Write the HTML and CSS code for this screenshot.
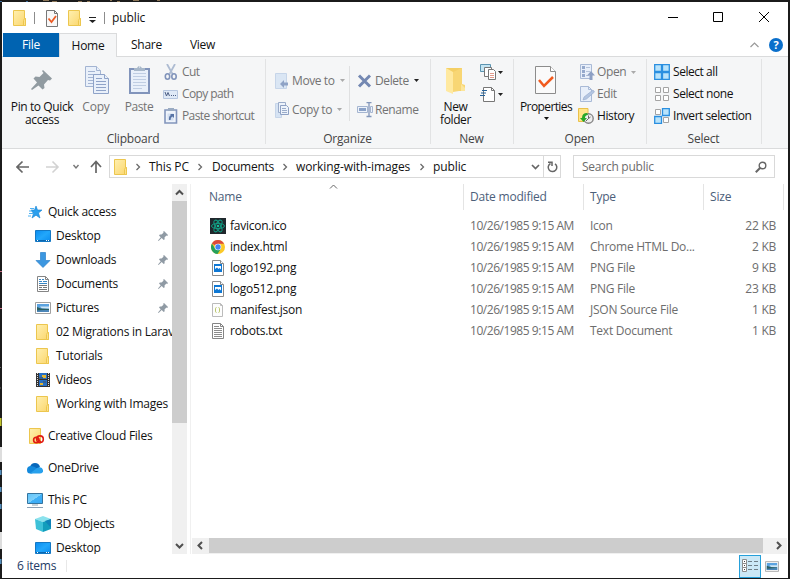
FILE: index.html
```html
<!DOCTYPE html>
<html lang="en">
<head>
<meta charset="utf-8">
<title>public</title>
<link rel="stylesheet" href="styles.css">
</head>
<body>
<svg class="defs" width="0" height="0" aria-hidden="true">
  <defs>
    <linearGradient id="gold" x1="0" y1="0" x2="1" y2="1"><stop offset="0" stop-color="#fff0b0"/><stop offset="1" stop-color="#fbd66d"/></linearGradient>
    <linearGradient id="sky" x1="0" y1="0" x2="1" y2="1"><stop offset="0" stop-color="#0a8cf0"/><stop offset=".5" stop-color="#22a7fb"/><stop offset="1" stop-color="#0a8cf0"/></linearGradient>
    <linearGradient id="screen" x1="0" y1="0" x2="1" y2="1"><stop offset="0" stop-color="#5fc3fa"/><stop offset=".5" stop-color="#7dd0fb"/><stop offset=".52" stop-color="#3fb0f7"/><stop offset="1" stop-color="#3aa9f5"/></linearGradient>
    <symbol id="folder" viewBox="0 0 16 16"><path d="M1.5.5h11v8h1v7h-12z" fill="url(#gold)" stroke="#ecc64e"/><path d="M11.5 15.5v-5l1-2h1v7z" fill="#fde28c" stroke="#ecc64e"/></symbol>
    <symbol id="pin" viewBox="0 0 10 10"><path d="M6 0l4 4-.8.9-.8-.3-1.9 1.9.2 1.7-1 .8-2-2L.6 10 0 9.500 2.700 6.200 1 4.400l.8-1 1.700.2L5.500 1.700 5.200.8z" fill="#8f9aa4"/></symbol>
    <symbol id="chev" viewBox="0 0 6 8"><path d="M1.500 1l3 3-3 3" fill="none" stroke="#6a6a6a" stroke-width="1.300"/></symbol>
    <symbol id="tri" viewBox="0 0 5 3"><path d="M0 0h5L2.500 3z" fill="currentColor"/></symbol>
    <symbol id="desktop" viewBox="0 0 16 16"><path d="M.5 2.500h15v11H.5z" fill="url(#sky)" stroke="#1478c4"/><path d="M1 12.500h14" stroke="#0b67b0"/><path d="M2 12.500h1m8 0h1m1 0h1" stroke="#fff"/></symbol>
    <symbol id="picture" viewBox="0 0 16 12"><path d="M.5.5h15v11H.5z" fill="#fff" stroke="#a0a0a0"/><path d="M2 2h12v8H2z" fill="#5ba3e0"/><path d="M5 4.500h9v2H7z" fill="#cfe6f5"/><path d="M2 5l4 1.500L14 7v1L2 9z" fill="#2b5f62"/><path d="M2 8.500L14 8v2H2z" fill="#4c86b8"/></symbol>
    <symbol id="png" viewBox="0 0 16 16"><path d="M2.500.5h8l3 3v12h-11z" fill="#fff" stroke="#8a8a8a"/><path d="M10.500.5v3h3" fill="#fff" stroke="#8a8a8a"/><path d="M4 4h8v8H4z" fill="#0f78d4"/><path d="M5 6h6v3.500L9.500 8 8.500 9 7 7.500 5 9z" fill="#fff"/></symbol>
  </defs>
</svg>
<svg class="backdrop" width="790" height="579" aria-hidden="true">
  <path d="M0 1.500h2m24 0h2" stroke="#3d6c9c"/><path d="M43 .5h6m3 1h5m21 0h4m5 0h3m20-1h2m5 1h3m13-1h6m18 0h3" stroke="#8b7557"/>
  <path d="M0 271.500h2M0 308.500h2" stroke="#c66b83"/><path d="M0 367.500h1M0 388h1" stroke="#666"/><path d="M0 418v8" stroke="#c3c52e" stroke-width="3"/>
  <path d="M0 447v15m0 70v17" stroke="#ddd" stroke-width="4"/><path d="M0 470v5m0 12v5m0 12v5m0 50v5" stroke="#548ebc" stroke-width="3"/>
</svg>
<div class="window">
  <header class="titlebar">
    <svg class="t-folder" width="16" height="16"><use href="#folder"/></svg>
    <i class="t-sep"></i>
    <svg class="t-doc" width="14" height="17" viewBox="0 0 14 17"><path d="M1.500.5h8l3 3v13h-11z" fill="#f8f8f8" stroke="#777"/><path d="M9.500.5v3h3" fill="none" stroke="#777"/><path d="M3.500 8.500l3 3.500 4.500-6" fill="none" stroke="#ec5b24" stroke-width="1.800"/></svg>
    <svg class="t-folder2" width="16" height="16"><use href="#folder"/></svg>
    <svg class="t-menu" width="7" height="6" viewBox="0 0 7 6"><path d="M0 .5h7" stroke="#222"/><path d="M0 3h7L3.500 6z" fill="#222"/></svg>
    <i class="t-sep"></i>
    <span class="t-title">public</span>
    <svg class="t-controls" width="104" height="12" viewBox="0 0 104 12" fill="none" stroke="#000"><path d="M0 6.500h10M45.500 1.500h9v9h-9zM91 1l10 10M101 1L91 11"/></svg>
  </header>
  <nav class="tabs">
    <span class="tab file">File</span><span class="tab home">Home</span><span class="tab share">Share</span><span class="tab view">View</span>
    <svg class="collapse" width="9" height="6" viewBox="0 0 9 6"><path d="M.5 5l4-4 4 4" fill="none" stroke="#999" stroke-width="1.200"/></svg>
    <span class="help">?</span>
  </nav>
  <section class="ribbon">
    <div class="group clipboard">
      <div class="content">
        <div class="big pinbtn"><svg width="32" height="32" viewBox="0 0 32 32"><path d="M17 5l9 8.500-2 2-2-.5-4 4.500.5 3.500-2 1.500-4-4L6 25l-1-1 6-6.500-3.500-4 2-2 4 .5 4-4L16 6z" fill="#919ba1"/></svg><span>Pin to Quick<br>access</span></div>
        <div class="big copy off"><svg width="32" height="32" viewBox="0 0 32 32"><g fill="#e9f0fa" stroke="#a3b4d2"><path d="M5.500 1.500h11l4 4v16h-15z"/><path d="M16.500 1.500v4h4M8 6.500h7M8 9.500h10M8 12.500h5M8 15.500h5M8 18.500h5"/><path d="M13.500 9.500h11l4 4v15h-15z" stroke="#8fa3c8"/><path d="M24.500 9.500v4h4M16 13.500h6M16 16.500h10M16 19.500h10M16 22.500h10M16 25.500h10" stroke="#8fa3c8"/></g></svg><span>Copy</span></div>
        <div class="big paste off"><svg width="32" height="32" viewBox="0 0 32 32"><path d="M7 4h19v24H7z" fill="#e9f0fa" stroke="#8194bb" stroke-width="2"/><path d="M10 8.500h13M10 11.500h13M10 14.500h13M10 17.500h13M10 20.500h13M10 23.500h9" stroke="#c0cee3"/><path d="M11 3h3q2-4 5 0h3v3H11z" fill="#a8b8ca"/><path d="M16 2h1" stroke="#fff"/></svg><span>Paste</span></div>
        <div class="list">
          <div class="item off"><svg width="16" height="16" viewBox="0 0 16 16"><path d="M4 0l5.500 10M12 0L6.500 10" stroke="#aebcd2" stroke-width="1.800" fill="none"/><ellipse cx="4.500" cy="12.500" rx="2.200" ry="2.700" fill="none" stroke="#8093ba" stroke-width="1.600"/><ellipse cx="11" cy="12.500" rx="2.200" ry="2.700" fill="none" stroke="#8093ba" stroke-width="1.600"/></svg><span>Cut</span></div>
          <div class="item off"><svg width="16" height="16" viewBox="0 0 16 16"><path d="M.5 4.500h14v8H.5z" fill="#dfe9f6" stroke="#b6c6df"/><path d="M2 6l1.500 4L5 6.500 6.500 10M8 9.500h1m1 0h1m1 0h1" stroke="#4c5e85" fill="none"/></svg><span>Copy path</span></div>
          <div class="item off"><svg width="16" height="16" viewBox="0 0 16 16"><path d="M2 2h11.500v13H2z" fill="#eff4fb" stroke="#8295bc" stroke-width="1.600"/><path d="M5 0h6v3H5z" fill="#9aabc2"/><path d="M4.500 5.500h6v7h-6z" fill="#d2def0"/><path d="M6 12q-.5-4 2-5L7 6h4v4L9.500 8.500Q7.500 9 7.500 12z" fill="#5874a6"/></svg><span>Paste shortcut</span></div>
        </div>
      </div><div class="caption">Clipboard</div>
    </div>
    <div class="group organize">
      <div class="content">
        <div class="list wide">
          <div class="item off"><svg width="16" height="16" viewBox="0 0 16 16"><path d="M.5.5h11v15H.5z" fill="#dae6f4" stroke="#c6d5e9"/><path d="M5 11l4-4v2.500h4v3H9V15z" fill="#8fa3c6"/></svg><span>Move to</span><svg class="tri" width="5" height="3"><use href="#tri"/></svg></div>
          <div class="item off"><svg width="16" height="16" viewBox="0 0 16 16"><path d="M.5 1.500h6v14h-6z" fill="#d6e3f3" stroke="#c6d5e9"/><path d="M3.500.5h7v10h-7z" fill="#edf3fb" stroke="#9bacca"/><path d="M5.500 3.500h6l2 2v7h-8z" fill="#edf3fb" stroke="#8ea1c4"/><path d="M7 6.500h4m-4 2h5m-5 2h5" stroke="#9bacca"/></svg><span>Copy to</span><svg class="tri" width="5" height="3"><use href="#tri"/></svg></div>
        </div>
        <i class="rule"></i>
        <div class="list wide right">
          <div class="item off"><svg width="16" height="16" viewBox="0 0 16 16"><path d="M2 2.500l11 11M13 2.500l-11 11" stroke="#7488b2" stroke-width="3"/></svg><span>Delete</span><svg class="tri dark" width="5" height="3"><use href="#tri"/></svg></div>
          <div class="item off"><svg width="16" height="16" viewBox="0 0 16 16"><path d="M.5 4.500h10v6H.5zM13.500 4.500h2v6h-2z" fill="#edf3fb" stroke="#a5b5d0"/><path d="M2 6h7v3H2z" fill="#8ba2c8"/><path d="M9.500.5h2.500m0 0h2.500M12 .5v14M9.500 14.500h5" stroke="#8296ba" stroke-width="1.300"/></svg><span>Rename</span></div>
        </div>
      </div><div class="caption">Organize</div>
    </div>
    <div class="group new">
      <div class="content">
        <div class="big"><svg width="32" height="32" viewBox="0 0 32 32"><path d="M6 3h16v20h3v3H6z" fill="#f4cf65"/><path d="M6 3l7 4v22l-7-3z" fill="#ffe9a0"/><path d="M13 7l9-4v16l3 1v5l-12 2z" fill="#f8d674"/><path d="M21 19l4 4v3h-4z" fill="#fce69b"/></svg><span>New<br>folder</span></div>
        <div class="list">
          <div class="item"><svg width="17" height="17" viewBox="0 0 17 17"><path d="M.5.5h10v7H.5z" fill="#c5e5f3" stroke="#5b94b1"/><path d="M4.500 3.500h7v9h-7z" fill="#fff" stroke="#777"/><path d="M8.500 5.500h5l2 2v8h-7z" fill="#fff" stroke="#777"/><path d="M10 9.500h4m-4 2h4m-4 2h4" stroke="#e29b8c"/></svg><svg class="tri dark" width="5" height="3"><use href="#tri"/></svg></div>
          <div class="item"><svg width="17" height="17" viewBox="0 0 17 17"><path d="M3.500 1.500h8l3 3v11h-11z" fill="#fff" stroke="#777"/><path d="M11.500 1.500v3h3" fill="none" stroke="#777"/><path d="M2 4.500h5M1 7h5M0 9.500h5" stroke="#27649b" stroke-width="1.200"/></svg><svg class="tri dark" width="5" height="3"><use href="#tri"/></svg></div>
        </div>
      </div><div class="caption">New</div>
    </div>
    <div class="group open">
      <div class="content">
        <div class="big"><svg width="32" height="32" viewBox="0 0 32 32"><path d="M5.500 1.500h15l5 5v22h-20z" fill="#fafafa" stroke="#8c8c8c"/><path d="M20.500 1.500v5h5" fill="#fff" stroke="#8c8c8c"/><path d="M9 15l5 6 9-9" fill="none" stroke="#f15a1d" stroke-width="2.500"/></svg><span>Properties</span><svg class="down" width="5" height="3"><use href="#tri"/></svg></div>
        <div class="list">
          <div class="item off"><svg width="16" height="16" viewBox="0 0 16 16"><path d="M.5.5h11v14H.5z" fill="#e8effa" stroke="#a9bad6"/><path d="M2 2h3v3H2zm0 4h3v3H2zm0 4h3v3H2z" fill="#95a9cc"/><path d="M6 3.500h4m-4 4h4m-4 4h3" stroke="#b5c3da"/><path d="M11 7l4 4.500h-2.500V16h-3v-4.500H7z" fill="#8da0c4"/></svg><span>Open</span><svg class="tri" width="5" height="3"><use href="#tri"/></svg></div>
          <div class="item off"><svg width="16" height="16" viewBox="0 0 16 16"><path d="M.5.5h8l3 3v12H.5z" fill="#e8effa" stroke="#a9bad6"/><path d="M8.500.5v3h3" fill="none" stroke="#a9bad6"/><path d="M3 14l1-3 9-7 1.500 2-8 7z" fill="#b4c6e2" stroke="#93a8cb" stroke-width=".6"/></svg><span>Edit</span></div>
          <div class="item history"><svg width="16" height="16" viewBox="0 0 16 16"><path d="M.5.5h9.500v13H.5z" fill="#ffe588" stroke="#eac04a"/><circle cx="10.500" cy="10.500" r="4.700" fill="#eee" stroke="#858585" stroke-width="1.400"/><path d="M10.500 7.500v3l2-1.500M8 13l2.500-2.500" stroke="#666" fill="none"/><path d="M2 10h2q0-5 5-5l1 2Q7 7 7 10h2l-3.500 4z" fill="#28a828"/></svg><span>History</span></div>
        </div>
      </div><div class="caption">Open</div>
    </div>
    <div class="group select">
      <div class="content"><div class="list">
        <div class="item"><svg width="16" height="16" viewBox="0 0 16 16"><path d="M.7.7h6.800v6.800H.7zm7.800 0h6.800v6.800H8.500zM.7 8.500h6.800v6.800H.7zm7.800 0h6.800v6.800H8.500z" fill="#b9e3fb" stroke="#2a8fe0" stroke-width="1.300"/></svg><span>Select all</span></div>
        <div class="item"><svg width="16" height="16" viewBox="0 0 16 16"><path d="M1.500 1.500h5v5h-5zm8 0h5v5h-5zm-8 8h5v5h-5zm8 0h5v5h-5z" fill="#fff" stroke="#a4a4a4"/></svg><span>Select none</span></div>
        <div class="item"><svg width="16" height="16" viewBox="0 0 16 16"><path d="M1.500 1.500h5v5h-5zm8 8h5v5h-5z" fill="#fff" stroke="#a4a4a4"/><path d="M8.500.7h6.800v6.800H8.500zM.7 8.500h6.800v6.800H.7z" fill="#b9e3fb" stroke="#2a8fe0" stroke-width="1.300"/></svg><span>Invert selection</span></div>
      </div></div><div class="caption">Select</div>
    </div>
  </section>
  <div class="address">
    <svg class="arrows" width="89" height="14" viewBox="0 0 89 14" fill="none"><path d="M1 7h12M6.500 1.500L1 7l5.500 5.500" stroke="#666" stroke-width="1.700"/><path d="M30 7h12M36.500 1.500L42 7l-5.500 5.500" stroke="#d2d2d2" stroke-width="1.600"/><path d="M57.500 5l2.500 3 2.500-3" stroke="#777" stroke-width="1.400"/><path d="M80 13V2M75 7l5-5.500L85 7" stroke="#666" stroke-width="1.700"/></svg>
    <div class="path">
      <svg class="pf" width="16" height="16"><use href="#folder"/></svg>
      <svg class="c1" width="6" height="8"><use href="#chev"/></svg><span class="p1">This PC</span>
      <svg class="c" width="6" height="8"><use href="#chev"/></svg><span class="p2">Documents</span>
      <svg class="c" width="6" height="8"><use href="#chev"/></svg><span class="p3">working-with-images</span>
      <svg class="c" width="6" height="8"><use href="#chev"/></svg><span class="p4">public</span>
      <svg class="drop" width="9" height="6" viewBox="0 0 9 6"><path d="M1 1l3.500 3.500L8 1" fill="none" stroke="#666" stroke-width="1.700"/></svg>
      <span class="refresh"><svg width="11" height="12" viewBox="0 0 11 12"><path d="M3.500 2.500A4.300 4.300 0 1 0 8 2.800" fill="none" stroke="#666" stroke-width="1.500"/><path d="M1 1.300h4V5" fill="none" stroke="#666" stroke-width="1.500"/></svg></span>
    </div>
    <div class="search"><span>Search public</span><svg width="12" height="12" viewBox="0 0 12 12" fill="none" stroke="#666"><circle cx="7.500" cy="4.500" r="3.300" stroke-width="1.400"/><path d="M5 7L.8 11.200" stroke-width="2"/></svg></div>
  </div>
  <main class="body">
    <aside class="tree">
      <div class="node root"><svg width="16" height="16" viewBox="0 0 16 16"><path d="M9 2l1.500 4h4.500l-3.500 3 1.500 5-4-2.800L5 14l1.500-4.500L4 6h3.500z" fill="#2a9fed" stroke="#1583d4" stroke-width=".6"/><path d="M3 4.500h4M2 7h3M2 9.500h4M1 12h3" stroke="#4eb2f2"/></svg><span>Quick access</span></div>
      <div class="node"><svg width="16" height="16"><use href="#desktop"/></svg><span>Desktop</span><svg class="pn" width="10" height="10"><use href="#pin"/></svg></div>
      <div class="node"><svg width="16" height="16" viewBox="0 0 16 16"><path d="M5.500.5h5v8h4.500L8 15.500 1 8.500h4.500z" fill="#3c97e0" stroke="#2c82cc" stroke-width=".7"/></svg><span>Downloads</span><svg class="pn" width="10" height="10"><use href="#pin"/></svg></div>
      <div class="node"><svg width="16" height="16" viewBox="0 0 16 16"><path d="M2.500.5h8l3 3v12h-11z" fill="#fff" stroke="#858585"/><path d="M10.500.5v3h3" fill="none" stroke="#858585"/><path d="M4 3.500h2m1 0h2M4 5.500h3m1 0h4M4 7.500h8" stroke="#3a88c6"/><path d="M4 9.500h8M4 11.500h3m1 0h4M4 13.500h8" stroke="#777"/></svg><span>Documents</span><svg class="pn" width="10" height="10"><use href="#pin"/></svg></div>
      <div class="node"><svg width="16" height="12"><use href="#picture"/></svg><span>Pictures</span><svg class="pn" width="10" height="10"><use href="#pin"/></svg></div>
      <div class="node"><svg width="16" height="16"><use href="#folder"/></svg><span>02 Migrations in Laravel</span></div>
      <div class="node"><svg width="16" height="16"><use href="#folder"/></svg><span>Tutorials</span></div>
      <div class="node"><svg width="16" height="16" viewBox="0 0 16 16"><path d="M1 1h14v14H1z" fill="#333"/><path d="M2.500 1v14M13.500 1v14" stroke="#ddd" stroke-dasharray="1 1"/><path d="M4 1h8v6H4zM4 8h8v6H4z" fill="#286fc3"/><path d="M7 3h4v3H7zM5 11h3v2H5z" fill="#e3b532"/><path d="M4 5h4v2H4zM8 9h3v2H8z" fill="#37608a"/></svg><span>Videos</span></div>
      <div class="node"><svg width="16" height="16"><use href="#folder"/></svg><span>Working with Images</span></div>
      <div class="node root spaced"><svg width="18" height="16" viewBox="0 0 18 16"><path d="M2.500.5h11v15h-11z" fill="url(#gold)" stroke="#ecc64e"/><g fill="none" stroke="#e11b12" stroke-width="1.600"><circle cx="9.300" cy="12" r="2.700"/><circle cx="13" cy="11.200" r="3.300"/><path d="M9 10l5 4"/></g></svg><span>Creative Cloud Files</span></div>
      <div class="node root spaced"><svg width="16" height="16" viewBox="0 0 16 16"><path d="M3 7q1-4 5-4t5 4l-4 3z" fill="#0868bb"/><path d="M0 10q0-4 4-4 3 0 7 3l-6 4.500H3Q0 13.500 0 10z" fill="#1389dc"/><path d="M3 13.500L10 8q5-2 6 2 .5 3.500-3 3.500z" fill="#28a1ed"/></svg><span>OneDrive</span></div>
      <div class="node root spaced"><svg width="16" height="16" viewBox="0 0 16 16"><path d="M.5 1.500h15v10H.5z" fill="url(#screen)" stroke="#35749f"/><path d="M5 13h6" stroke="#8fa4b2"/><path d="M0 15.500h16" stroke="#8ca1b5"/></svg><span>This PC</span></div>
      <div class="node"><svg width="16" height="16" viewBox="0 0 16 16"><path d="M0 3l8-3 8 3-8 3z" fill="#8be2ed"/><path d="M0 3l8 3v10l-7-3z" fill="#3dc1d8"/><path d="M8 6l8-3v10l-8 3z" fill="#129dbc"/><path d="M10 5l6-2v9z" fill="#0f83b9"/></svg><span>3D Objects</span></div>
      <div class="node last"><svg width="16" height="16"><use href="#desktop"/></svg><span>Desktop</span></div>
    </aside>
    <div class="vscroll"><svg width="15" height="17" viewBox="0 0 15 17"><path d="M4 10.500L7.500 7l3.500 3.500" fill="none" stroke="#505050" stroke-width="2"/></svg><i class="vthumb"></i><svg class="end" width="15" height="17" viewBox="0 0 15 17"><path d="M4 7l3.500 3.500L11 7" fill="none" stroke="#505050" stroke-width="2"/></svg></div>
    <section class="files">
      <svg class="sort" width="9" height="5" viewBox="0 0 9 5"><path d="M1 4.500l3.500-3.500L8 4.500" fill="none" stroke="#666"/></svg>
      <div class="row head"><span>Name</span><span>Date modified</span><span>Type</span><span>Size</span></div>
      <div class="row"><span class="nm"><svg width="16" height="16" viewBox="0 0 16 16"><path d="M0 0h16v16H0z" fill="#20282d"/><g fill="none" stroke="#119c82"><ellipse cx="8" cy="8" rx="6.500" ry="2.600"/><ellipse cx="8" cy="8" rx="6.500" ry="2.600" transform="rotate(60 8 8)"/><ellipse cx="8" cy="8" rx="6.500" ry="2.600" transform="rotate(120 8 8)"/></g><circle cx="8" cy="8" r="1.300" fill="#16c09c"/></svg>favicon.ico</span><span class="date">10/26/1985 9:15 AM</span><span>Icon</span><span>22 KB</span></div>
      <div class="row"><span class="nm"><svg width="16" height="16" viewBox="0 0 16 16"><circle cx="8" cy="8" r="7" fill="#fbc928"/><path d="M8 8L1.900 4.500A7 7 0 0 1 14.100 4.800H8z" fill="#dc4a3d"/><path d="M1.900 4.500A7 7 0 0 0 7.500 15L11 9.500 8 8 5 9.600z" fill="#26a05b"/><circle cx="8" cy="8" r="3.300" fill="#fff"/><circle cx="8" cy="8" r="2.700" fill="#4385f4"/></svg>index.html</span><span class="date">10/26/1985 9:15 AM</span><span>Chrome HTML Do...</span><span>2 KB</span></div>
      <div class="row"><span class="nm"><svg width="16" height="16"><use href="#png"/></svg>logo192.png</span><span class="date">10/26/1985 9:15 AM</span><span>PNG File</span><span>9 KB</span></div>
      <div class="row"><span class="nm"><svg width="16" height="16"><use href="#png"/></svg>logo512.png</span><span class="date">10/26/1985 9:15 AM</span><span>PNG File</span><span>23 KB</span></div>
      <div class="row"><span class="nm"><svg width="16" height="16" viewBox="0 0 16 16"><path d="M2.500 1.500h8l2 2v11h-10z" fill="#fdfdfd" stroke="#bbb"/><path d="M10.500 1.500v2h2" fill="none" stroke="#bbb"/><path d="M6.500 5.500q-1 0-1 1.300v2.400q0 1.300 1 1.300M8.500 5.500q1 0 1 1.300v2.400q0 1.300-1 1.300" fill="none" stroke="#b9c66a"/></svg>manifest.json</span><span class="date">10/26/1985 9:15 AM</span><span>JSON Source File</span><span>1 KB</span></div>
      <div class="row"><span class="nm"><svg width="16" height="16" viewBox="0 0 16 16"><path d="M2.500.5h8l3 3v12h-11z" fill="#fff" stroke="#858585"/><path d="M10.500.5v3h3" fill="none" stroke="#858585"/><path d="M4 3.500h5M4 5.500h8M4 7.500h8M4 9.500h8M4 11.500h8M4 13.500h8" stroke="#8c8c8c"/></svg>robots.txt</span><span class="date">10/26/1985 9:15 AM</span><span>Text Document</span><span>1 KB</span></div>
      <div class="hscroll"><svg width="17" height="15" viewBox="0 0 17 15"><path d="M10 4L6.500 7.500 10 11" fill="none" stroke="#505050" stroke-width="2"/></svg><i class="hthumb"></i><svg class="hend" width="17" height="15" viewBox="0 0 17 15"><path d="M7 4l3.500 3.500L7 11" fill="none" stroke="#505050" stroke-width="2"/></svg></div>
    </section>
  </main>
  <footer class="status"><span class="count">6 items</span><i></i>
    <div class="details"><svg width="16" height="14" viewBox="0 0 16 14"><path d="M.5.500h4v4h-4zm0 4h4v4h-4zm0 4h4v4h-4z" fill="#fff" stroke="#8c8c8c"/><path d="M2 2.500h1m-1 4h1m-1 4h1" stroke="#444"/><path d="M6 2.500h4m2 0h4m-10 4h4m2 0h4m-10 4h4m2 0h4" stroke="#6f7f88"/></svg></div>
    <svg class="thumbs" width="14" height="11"><use href="#picture"/></svg>
  </footer>
</div>
</body>
</html>
```
FILE: styles.css
```css
* { box-sizing: border-box; }
body { margin: 0; padding: 2px 2px 1px; width: 790px; height: 579px; overflow: hidden; background: #1b1b1b; font: 12px/16px "Open Sans", "Noto Sans", sans-serif; letter-spacing: -.25px; color: #111; }
svg { display: block; flex: none; }
.defs, .backdrop { position: absolute; left: 0; top: 0; }
.window { position: relative; width: 786px; height: 576px; background: #fff; display: flex; flex-direction: column; overflow: hidden; white-space: nowrap; }

.titlebar { height: 31px; flex: none; display: flex; align-items: center; padding-left: 10px; }
.t-sep { width: 1px; height: 12px; background: #8c8c8c; }
.t-folder { margin-right: 6px; }
.t-doc { margin-left: 10px; margin-top: 1px; }
.t-folder2 { margin-left: 8px; margin-top: 1px; }
.t-menu { margin: 5px 8px 0 6px; }
.t-title { margin-left: 7px; letter-spacing: -.1px; }
.t-controls { margin-left: auto; margin-right: 16px; margin-top: -1px; }

.tabs { height: 24px; flex: none; display: flex; align-items: center; border-bottom: 1px solid #dadbdc; padding-left: 1px; }
.tab { height: 24px; line-height: 24px; text-align: center; }
.file { width: 56px; background: #0063b1; color: #fff; }
.home { width: 58px; background: #f5f6f7; border: 1px solid #dadbdc; border-bottom: 0; line-height: 23px; }
.share { width: 59px; }
.view { width: 53px; }
.collapse { margin-left: auto; }
.help { width: 14px; height: 14px; margin: 0 5px 0 10px; border-radius: 50%; background: #0a6fcb; color: #fff; font-weight: 700; font-size: 11px; line-height: 14px; text-align: center; }

.ribbon { height: 92px; flex: none; display: flex; background: #f5f6f7; border-bottom: 1px solid #dadbdc; letter-spacing: -.4px; }
.group { position: relative; padding-top: 4px; }
.group::after { content: ""; position: absolute; right: 0; top: 2px; bottom: 4px; width: 1px; background: #e2e3e4; }
.clipboard { width: 264px; }
.organize { width: 165px; }
.new { width: 83px; }
.open { width: 133px; }
.select { width: 115px; }
.content { display: flex; height: 66px; }
.caption { margin-top: 4px; text-align: center; color: #444; padding-right: 2px; letter-spacing: -.2px; }
.off { color: #737373; }
.big { display: flex; flex-direction: column; align-items: center; padding-top: 4px; text-align: center; line-height: 13px; }
.big span { margin-top: 3px; }
.pinbtn { width: 70px; margin-left: 5px; }
.copy { width: 38px; letter-spacing: -.2px; }
.paste { width: 48px; }
.item { display: flex; align-items: center; height: 22px; }
.item span { margin-left: 3px; }
.clipboard .list { letter-spacing: -.6px; }
.tri { margin-left: 5px; color: #aaa; }
.dark { color: #222; }
.wide { width: 77px; padding: 5px 0 0; margin-left: 9px; }
.wide .item { height: 29px; }
.wide span { margin-left: 1px; }
.rule { width: 1px; height: 55px; margin-top: 5px; background: #dfe0e1; }
.wide.right { margin-left: 7px; }
.wide.right span { margin-left: 2px; }
.new .big { width: 49px; }
.new .tri { margin-left: 1px; }
.open .big { width: 64px; letter-spacing: -.6px; }
.open .list { margin-left: 2px; }
.open .item span { margin-left: 1px; }
.history { margin-left: -2px; }
.open .history span { margin-left: 3px; }
.down { margin-top: 4px; }
.select .list { margin-left: 7px; letter-spacing: -.45px; }

.address { height: 35px; flex: none; display: flex; align-items: center; padding-left: 14px; }
.arrows { margin-right: 4px; }
.path { width: 452px; height: 23px; border: 1px solid #d9d9d9; display: flex; align-items: center; letter-spacing: -.1px; }
.pf { margin-left: 3px; }
.c1 { margin-left: 6px; }
.p1 { margin-left: 8px; width: 48px; }
.p2 { margin-left: 9px; width: 70px; letter-spacing: -.25px; }
.p3 { margin-left: 8px; width: 123px; }
.p4 { margin-left: 8px; }
.drop { margin-left: auto; margin-right: 3px; }
.refresh { border-left: 1px solid #d9d9d9; width: 17px; height: 21px; display: grid; place-items: center; }
.search { width: 202px; height: 23px; margin-left: 12px; border: 1px solid #d9d9d9; display: flex; align-items: center; justify-content: space-between; padding: 0 7px 0 8px; color: #6d6d6d; }

.body { height: 370px; flex: none; display: flex; }
.tree { width: 170px; padding-top: 16px; overflow: hidden; }
.node { position: relative; height: 24px; display: flex; align-items: center; padding-left: 33px; }
.node span { margin-left: 5px; }
.root { padding-left: 25px; }
.root svg[width="18"] + span { margin-left: 3px; }
.spaced { margin-top: 8px; }
.pn { position: absolute; left: 156px; top: 7px; }
.vscroll { width: 15px; background: #f0f0f0; display: flex; flex-direction: column; }
.vthumb { height: 222px; background: #cdcdcd; }
.end { margin-top: auto; }
.files { position: relative; flex: 1; margin-left: 3px; border-left: 1px solid #f0f0f0; display: flex; flex-direction: column; }
.sort { position: absolute; left: 138px; top: 0; }
.row { display: grid; grid-template-columns: 273px 120px 120px 80px; height: 21px; line-height: 21px; color: #6d6d6d; }
.row > span { padding-left: 6px; }
.row > span:first-child { padding-left: 19px; }
.row > span:last-child { text-align: right; padding-right: 8px; }
.row .nm { display: flex; align-items: center; gap: 4px; color: #111; }
.date { letter-spacing: -.45px; }
.head { height: 25px; line-height: 26px; color: #4c607a; margin-bottom: 6px; letter-spacing: -.2px; }
.head > span { border-right: 1px solid #e4e4e4; }
.row.head > span:first-child { padding-left: 18px; }
.row.head > span:last-child { text-align: left; }
.hscroll { width: 595px; height: 16px; margin: auto 0 0 1px; background: #f0f0f0; display: flex; }
.hthumb { width: 554px; height: 15px; background: #cdcdcd; }
.hend { margin-left: auto; }

.status { flex: 1; display: flex; align-items: center; padding-left: 15px; color: #1e3a66; }
.status i { width: 1px; height: 12px; background: #e8e8e8; margin-left: 10px; }
.details { width: 22px; height: 23px; margin-left: auto; border: 1px solid #26a0da; background: #cbe8f6; display: grid; place-items: center; }
.thumbs { margin: 0 9px 0 4px; }
```
